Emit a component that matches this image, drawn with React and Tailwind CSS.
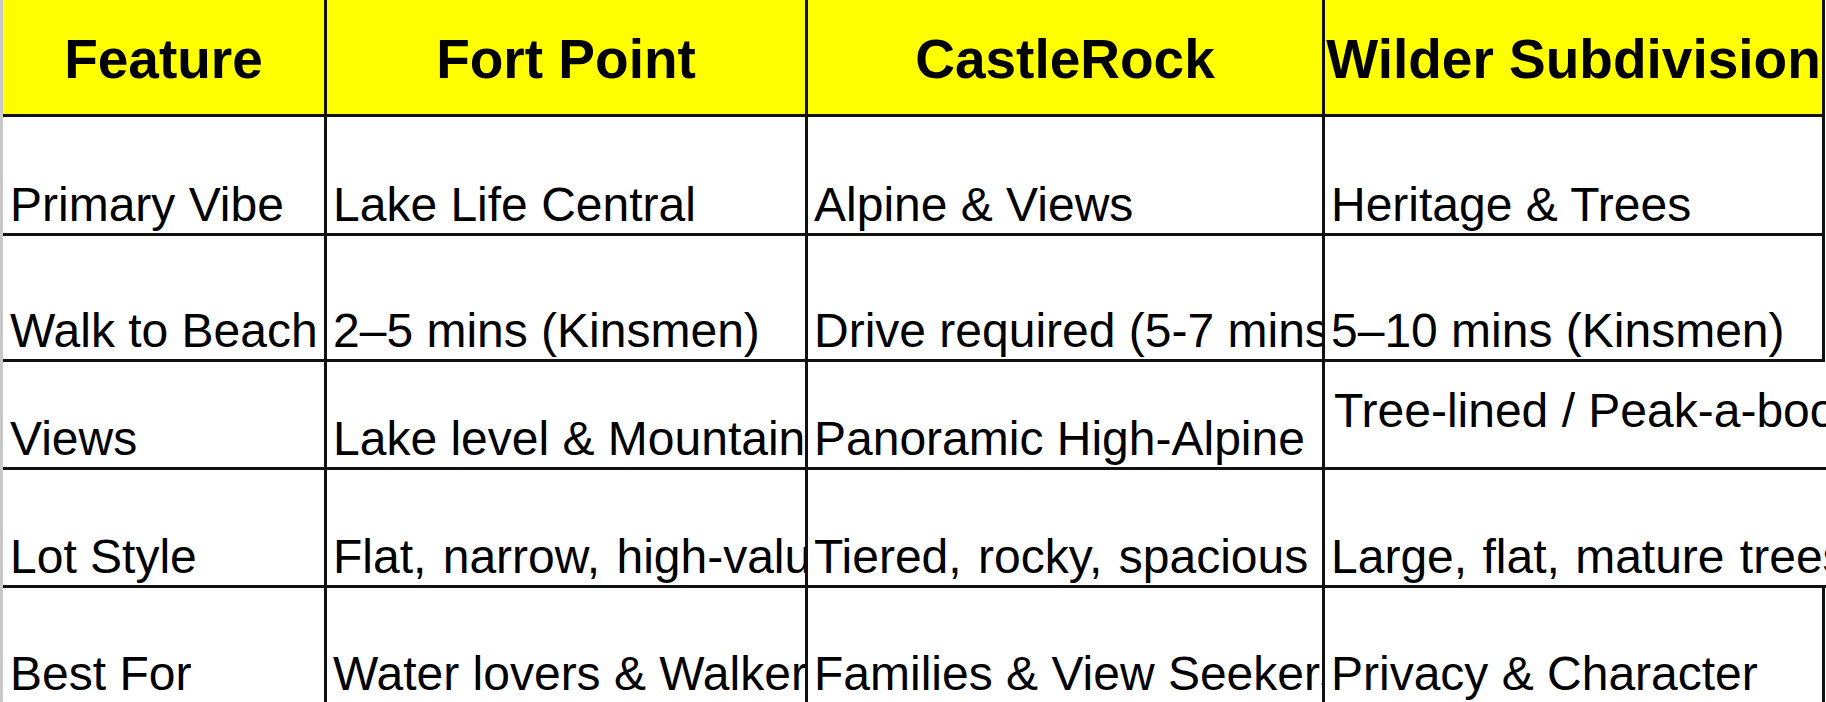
import React from "react";

const rows = [
  {
    h: "h-[119px]",
    rb: true,
    cells: ["Primary Vibe", "Lake Life Central", "Alpine & Views", "Heritage & Trees"],
  },
  {
    h: "h-[126px]",
    rb: true,
    cells: ["Walk to Beach", "2–5 mins (Kinsmen)", "Drive required (5-7 mins)", "5–10 mins (Kinsmen)"],
  },
  {
    h: "h-[108px]",
    rb: false,
    top: true,
    cells: ["Views", "Lake level & Mountain", "Panoramic High-Alpine", "Tree-lined / Peak-a-boo"],
  },
  {
    h: "h-[118px]",
    rb: false,
    wide: true,
    cells: ["Lot Style", "Flat, narrow, high-value", "Tiered, rocky, spacious", "Large, flat, mature trees"],
  },
  {
    h: "h-[117px]",
    rb: true,
    cells: ["Best For", "Water lovers & Walkers", "Families & View Seekers", "Privacy & Character"],
  },
];

const headers = ["Feature", "Fort Point", "CastleRock", "Wilder Subdivision"];

export default function App() {
  return (
    <div className="flex w-[1826px] h-[702px] overflow-hidden bg-white font-['Liberation_Sans',Arial,sans-serif] text-black">
      <div className="w-[3px] shrink-0 bg-[#c8c8c8]" />
      <div className="flex-1 flex flex-col min-w-0">
        <div className="grid grid-cols-[324px_481px_517px_1fr] h-[117px] shrink-0">
          {headers.map((t, i) => (
            <div
              key={t}
              className={
                i < 3
                  ? "flex items-center justify-center overflow-hidden whitespace-nowrap bg-[#ffff00] border-b-[3px] border-r-[3px] border-[#111] pt-[5px] text-[55px] font-bold leading-none"
                  : "flex items-center justify-center overflow-hidden whitespace-nowrap bg-[#ffff00] border-b-[3px] border-r-[3px] border-[#111] mr-[1px] pt-[5px] text-[55px] font-bold leading-none"
              }
            >
              {t}
            </div>
          ))}
        </div>
        {rows.map((r, ri) => (
          <div key={ri} className={"grid grid-cols-[324px_481px_517px_1fr] shrink-0 " + r.h}>
            {r.cells.map((c, ci) => {
              let cls;
              if (ci === 0) {
                cls =
                  "flex items-end overflow-hidden whitespace-nowrap pl-[7px] pb-[4px] text-[48px] leading-none border-b-[3px] border-r-[3px] border-[#111]";
              } else if (ci < 3) {
                cls = r.wide
                  ? "flex items-end overflow-hidden whitespace-nowrap pl-[6px] pb-[4px] text-[48px] leading-none [word-spacing:3px] border-b-[3px] border-r-[3px] border-[#111]"
                  : "flex items-end overflow-hidden whitespace-nowrap pl-[6px] pb-[4px] text-[48px] leading-none border-b-[3px] border-r-[3px] border-[#111]";
              } else if (r.top) {
                cls =
                  "flex items-start overflow-hidden whitespace-nowrap pl-[9px] pt-[25px] text-[48px] leading-none border-b-[3px] border-[#111]";
              } else if (r.rb) {
                cls =
                  "flex items-end overflow-hidden whitespace-nowrap pl-[6px] pb-[4px] text-[48px] leading-none border-b-[3px] border-r-[3px] border-[#111] mr-[1px]";
              } else {
                cls =
                  "flex items-end overflow-hidden whitespace-nowrap pl-[6px] pb-[4px] text-[48px] leading-none [word-spacing:2px] border-b-[3px] border-[#111]";
              }
              return (
                <div key={ci} className={cls}>
                  {c}
                </div>
              );
            })}
          </div>
        ))}
      </div>
    </div>
  );
}
